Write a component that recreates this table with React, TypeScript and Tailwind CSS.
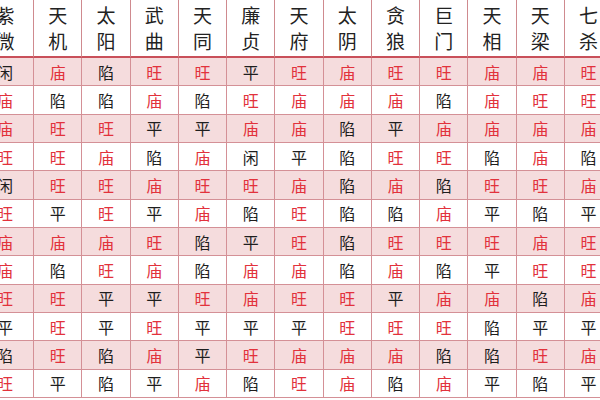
const stars = [
  "紫微", "天机", "太阳", "武曲", "天同", "廉贞", "天府",
  "太阴", "贪狼", "巨门", "天相", "天梁", "七杀",
];

// one row per palace, one entry per star
const rows = [
  "闲庙陷旺旺平旺庙旺旺庙庙旺",
  "庙陷陷庙陷旺庙庙庙陷庙旺旺",
  "庙旺旺平平庙庙陷平庙庙庙庙",
  "旺旺庙陷庙闲平陷旺旺陷庙陷",
  "闲旺旺庙旺旺庙陷庙陷旺旺庙",
  "旺平旺平庙陷旺陷陷庙平陷平",
  "庙庙庙旺陷平旺陷旺旺旺庙旺",
  "庙陷旺庙陷庙庙陷庙陷平旺旺",
  "旺旺平平旺庙旺旺平庙庙陷庙",
  "平旺平旺平平平旺旺旺陷平平",
  "陷旺陷庙平旺庙庙庙陷陷旺庙",
  "旺平陷平庙陷旺庙陷庙平陷平",
];

const isGood = (v: string) => v === "庙" || v === "旺";

export default function App() {
  return (
    <div
      className="w-[600px] h-[400px] overflow-hidden bg-white"
      style={{ fontFamily: '"Noto Sans CJK SC", "Noto Sans", sans-serif' }}
    >
      <div className="ml-[-23px] grid grid-cols-[57px_repeat(12,48.27px)] grid-rows-[58px_repeat(12,28.33px)]">
        {stars.map((s) => (
          <div
            key={s}
            className="flex flex-col items-center justify-center border-r border-b-2 border-r-[#cf8a8f] border-b-[#c9505a] text-[19px] leading-[26px] text-[#222]"
          >
            <span>{s[0]}</span>
            <span>{s[1]}</span>
          </div>
        ))}
        {rows.map((r, i) =>
          Array.from(r).map((v, j) => (
            <div
              key={`${i}-${j}`}
              className={`flex items-center justify-center border-r border-b border-[#d49096] text-[16px] ${
                i % 2 === 0 ? "bg-[#f5dcdd]" : "bg-white"
              } ${isGood(v) ? "text-[#e2323c]" : "text-[#1e1e1e]"}`}
            >
              {v}
            </div>
          ))
        )}
      </div>
    </div>
  );
}
